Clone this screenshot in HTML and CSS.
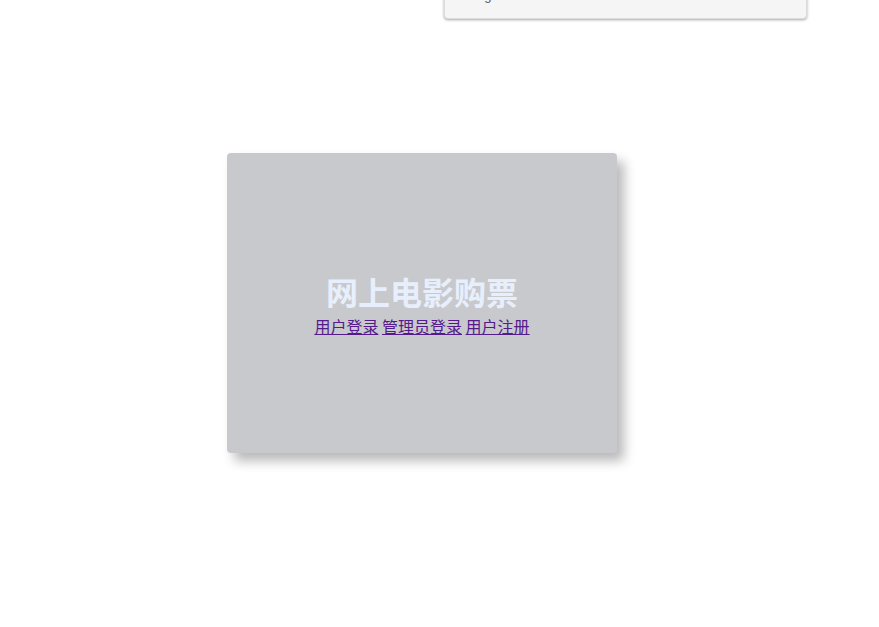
FILE: index.html
```html
<!DOCTYPE html>
<html lang="zh-CN">
<head>
<meta charset="utf-8">
<title>网上电影购票</title>
<link rel="stylesheet" href="styles.css">
</head>
<body>
<div class="popup"><span class="popup-text">Settings</span></div>
<main class="page">
  <section class="card">
    <h1 class="title">网上电影购票</h1>
    <nav class="links">
      <a href="#login">用户登录</a>
      <a href="#admin">管理员登录</a>
      <a href="#register">用户注册</a>
    </nav>
  </section>
</main>
</body>
</html>
```

FILE: styles.css
```css
html, body {
  margin: 0;
  padding: 0;
  background: #ffffff;
}
body {
  font-family: "Noto Sans CJK SC", "Noto Sans", sans-serif;
  width: 879px;
  height: 627px;
  overflow: hidden;
  position: relative;
}
.popup {
  position: absolute;
  left: 444px;
  top: -30px;
  width: 361px;
  height: 47px;
  background: #f5f5f5;
  border: 1px solid #dcdcdc;
  border-radius: 4px;
  box-shadow: 0 1px 3px rgba(0, 0, 0, 0.35);
}
.popup-text {
  position: absolute;
  left: 6px;
  top: 18px;
  font-family: "Liberation Sans", Arial, sans-serif;
  font-size: 13px;
  line-height: 13px;
  color: #555555;
}
.page {
  padding: 153px 0 0 227px;
}
.card {
  box-sizing: border-box;
  width: 390px;
  height: 300px;
  background: #c8c9cd;
  border-radius: 4px;
  box-shadow: 7px 8px 12px rgba(0, 0, 0, 0.28);
  padding-top: 118px;
  text-align: center;
}
.title {
  margin: 0;
  font-size: 32px;
  line-height: 40px;
  font-weight: bold;
  color: #e8effc;
}
.links {
  margin-top: 3px;
  font-size: 16px;
  line-height: 24px;
}
.links a {
  color: #551a8b;
  text-decoration: underline;
}
```
